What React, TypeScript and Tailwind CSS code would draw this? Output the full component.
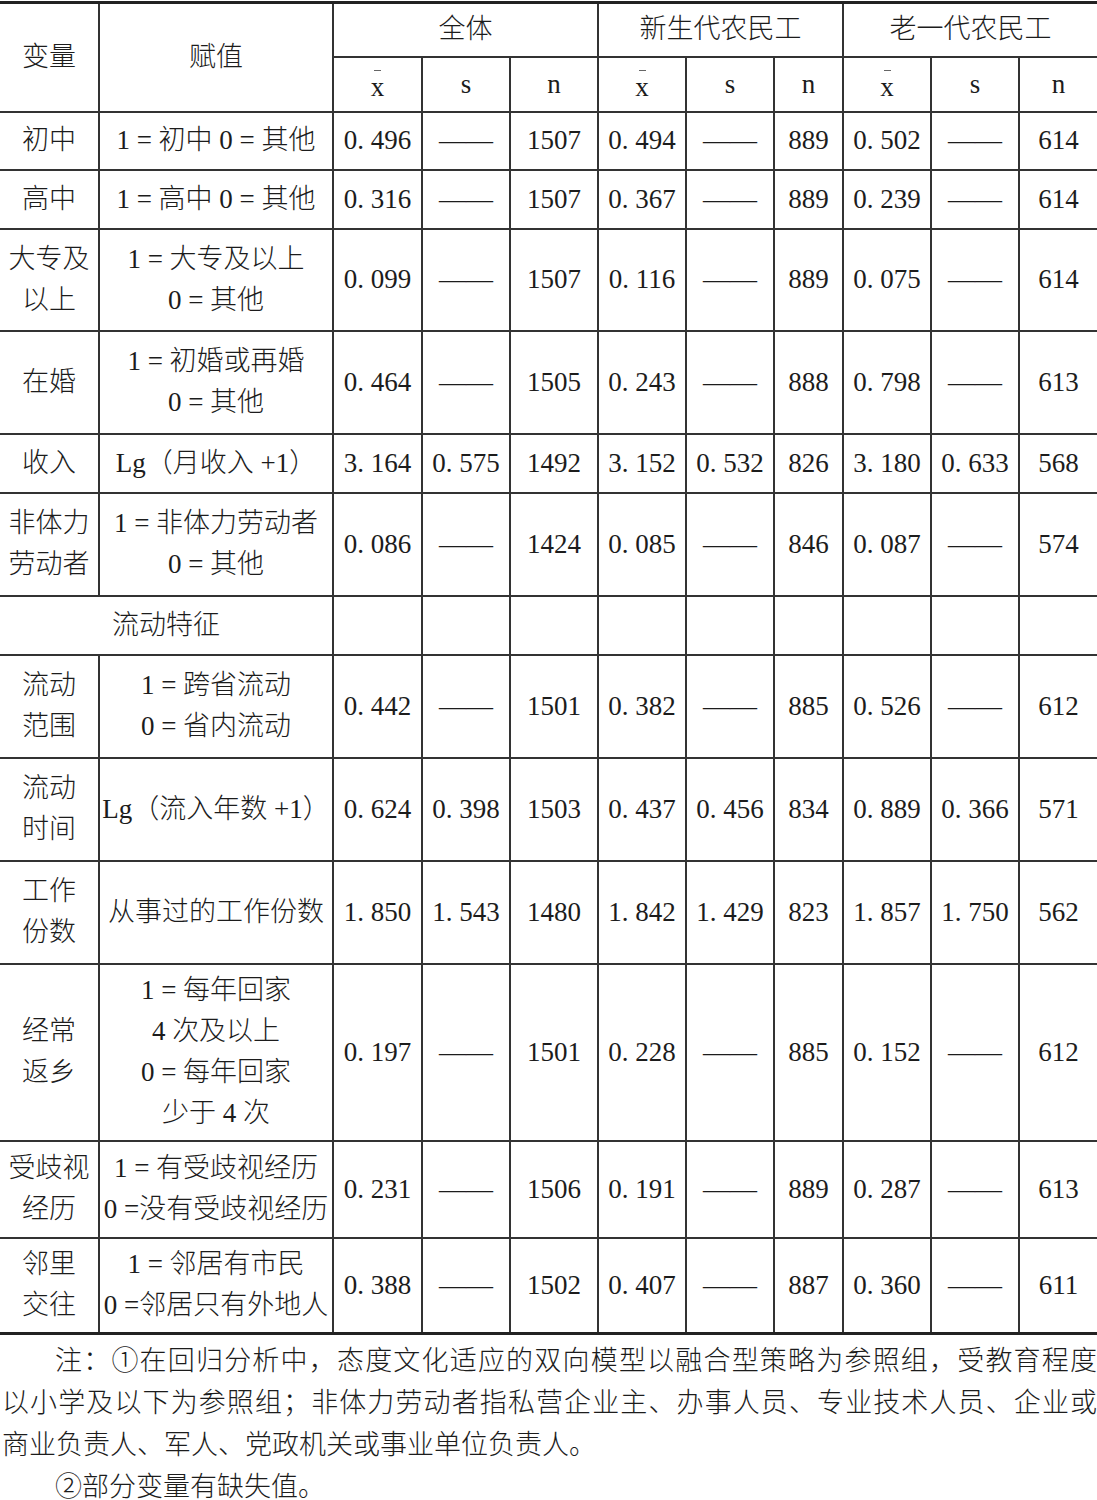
import React from "react";

type Row = {
  v: string[];
  a: string[];
  d: string[];
  h: number;
};

const D = "——";

const rows: Row[] = [
  { v: ["初中"], a: ["1 = 初中 0 = 其他"], d: ["0. 496", D, "1507", "0. 494", D, "889", "0. 502", D, "614"], h: 58 },
  { v: ["高中"], a: ["1 = 高中 0 = 其他"], d: ["0. 316", D, "1507", "0. 367", D, "889", "0. 239", D, "614"], h: 59 },
  { v: ["大专及", "以上"], a: ["1 = 大专及以上", "0 = 其他"], d: ["0. 099", D, "1507", "0. 116", D, "889", "0. 075", D, "614"], h: 102 },
  { v: ["在婚"], a: ["1 = 初婚或再婚", "0 = 其他"], d: ["0. 464", D, "1505", "0. 243", D, "888", "0. 798", D, "613"], h: 103 },
  { v: ["收入"], a: ["Lg（月收入 +1）"], d: ["3. 164", "0. 575", "1492", "3. 152", "0. 532", "826", "3. 180", "0. 633", "568"], h: 59 },
  { v: ["非体力", "劳动者"], a: ["1 = 非体力劳动者", "0 = 其他"], d: ["0. 086", D, "1424", "0. 085", D, "846", "0. 087", D, "574"], h: 103 },
];

const rows2: Row[] = [
  { v: ["流动", "范围"], a: ["1 = 跨省流动", "0 = 省内流动"], d: ["0. 442", D, "1501", "0. 382", D, "885", "0. 526", D, "612"], h: 103 },
  { v: ["流动", "时间"], a: ["Lg（流入年数 +1）"], d: ["0. 624", "0. 398", "1503", "0. 437", "0. 456", "834", "0. 889", "0. 366", "571"], h: 103 },
  { v: ["工作", "份数"], a: ["从事过的工作份数"], d: ["1. 850", "1. 543", "1480", "1. 842", "1. 429", "823", "1. 857", "1. 750", "562"], h: 103 },
  { v: ["经常", "返乡"], a: ["1 = 每年回家", "4 次及以上", "0 = 每年回家", "少于 4 次"], d: ["0. 197", D, "1501", "0. 228", D, "885", "0. 152", D, "612"], h: 177 },
  { v: ["受歧视", "经历"], a: ["1 = 有受歧视经历", "0 =没有受歧视经历"], d: ["0. 231", D, "1506", "0. 191", D, "889", "0. 287", D, "613"], h: 97 },
  { v: ["邻里", "交往"], a: ["1 = 邻居有市民", "0 =邻居只有外地人"], d: ["0. 388", D, "1502", "0. 407", D, "887", "0. 360", D, "611"], h: 96 },
];

const widths = [99, 234, 89, 88, 88, 88, 88, 69, 88, 88, 78];

const cell = "border-2 border-[#333] text-center align-middle p-0 whitespace-nowrap";

function Lines({ items }: { items: string[] }) {
  return (
    <>
      {items.map((t, i) => (
        <div key={i}>{t}</div>
      ))}
    </>
  );
}

function DataRow({ r }: { r: Row }) {
  return (
    <tr style={{ height: r.h }}>
      <td className={`${cell} border-l-0`}>
        <Lines items={r.v} />
      </td>
      <td className={cell}>
        <Lines items={r.a} />
      </td>
      {r.d.map((x, i) => (
        <td key={i} className={`${cell} ${i === 8 ? "border-r-0" : ""}`}>
          {x}
        </td>
      ))}
    </tr>
  );
}

function XBar() {
  return (
    <div className="flex flex-col items-center">
      <span className="w-[7px] h-px bg-[#666] mb-[4px]" />
      <span className="leading-[24px]">x</span>
    </div>
  );
}

export default function App() {
  const groups = ["全体", "新生代农民工", "老一代农民工"];
  return (
    <div className="w-[1097px] bg-white text-[#1c1c1c] text-[27px] leading-[41px] font-['Liberation_Serif','Noto_Sans_CJK_SC',serif] font-light pt-[1px]">
      <table className="w-full table-fixed border-collapse border-t-[3px] border-b-[3px] border-[#222]">
        <colgroup>
          {widths.map((w, i) => (
            <col key={i} style={{ width: w }} />
          ))}
        </colgroup>
        <thead>
          <tr className="h-[54px]">
            <td rowSpan={2} className={`${cell} border-l-0 border-t-[3px] border-t-[#222]`}>变量</td>
            <td rowSpan={2} className={`${cell} border-t-[3px] border-t-[#222]`}>赋值</td>
            {groups.map((g, i) => (
              <td key={g} colSpan={3} className={`${cell} border-t-[3px] border-t-[#222] ${i === 2 ? "border-r-0" : ""}`}>
                {g}
              </td>
            ))}
          </tr>
          <tr className="h-[55px]">
            {[0, 1, 2].map((g) => (
              <React.Fragment key={g}>
                <td className={cell}>
                  <XBar />
                </td>
                <td className={cell}>s</td>
                <td className={`${cell} ${g === 2 ? "border-r-0" : ""}`}>n</td>
              </React.Fragment>
            ))}
          </tr>
        </thead>
        <tbody>
          {rows.map((r, i) => (
            <DataRow key={i} r={r} />
          ))}
          <tr className="h-[59px]">
            <td colSpan={2} className={`${cell} border-l-0`}>流动特征</td>
            {Array.from({ length: 9 }).map((_, i) => (
              <td key={i} className={`${cell} ${i === 8 ? "border-r-0" : ""}`} />
            ))}
          </tr>
          {rows2.map((r, i) => (
            <DataRow key={i} r={r} />
          ))}
        </tbody>
      </table>
      <div className="mt-[5px] leading-[42px]">
        <div className="pl-[55px] text-justify [text-align-last:justify] whitespace-nowrap">
          注：①在回归分析中，态度文化适应的双向模型以融合型策略为参照组，受教育程度
        </div>
        <div className="pl-[2px] text-justify [text-align-last:justify] whitespace-nowrap">
          以小学及以下为参照组；非体力劳动者指私营企业主、办事人员、专业技术人员、企业或
        </div>
        <div className="pl-[2px]">商业负责人、军人、党政机关或事业单位负责人。</div>
        <div className="pl-[55px]">②部分变量有缺失值。</div>
      </div>
    </div>
  );
}
